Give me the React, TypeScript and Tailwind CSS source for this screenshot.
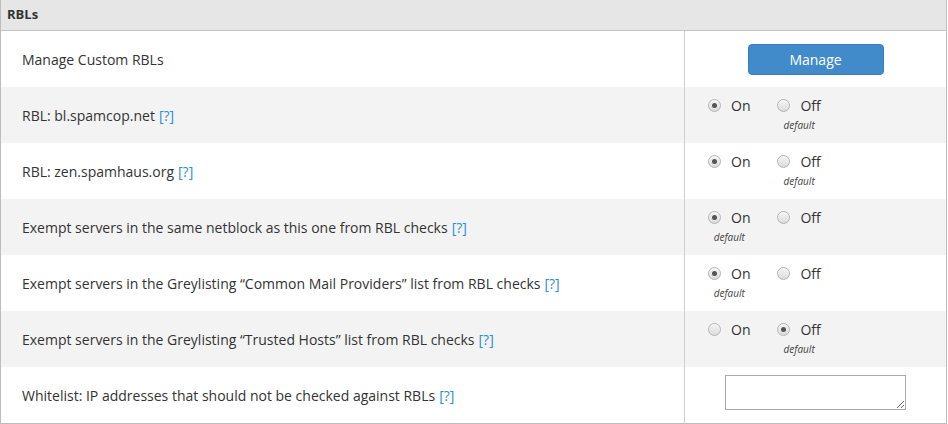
import React from "react";

function Radio({ checked }: { checked: boolean }) {
  return (
    <span className="inline-flex items-center justify-center w-[13px] h-[13px] rounded-full border border-[#b4b4b4] bg-gradient-to-b from-[#f4f4f4] to-[#dcdcdc] shadow-[inset_0_1px_1px_rgba(255,255,255,0.8)]">
      {checked && <span className="block w-[5px] h-[5px] rounded-full bg-[#555]" />}
    </span>
  );
}

function Opt({ label, checked, def }: { label: string; checked: boolean; def: boolean }) {
  return (
    <div className="flex flex-col items-center">
      <div className="flex items-center h-[20px]">
        <Radio checked={checked} />
        <span className="ml-[10px] text-[14px] text-[#333]">{label}</span>
      </div>
      <div className="mt-[3px] h-[14px] leading-[14px] text-[10px] italic text-[#444]">{def ? "default" : ""}</div>
    </div>
  );
}

function OnOff({ on, def }: { on: boolean; def: "on" | "off" }) {
  return (
    <div className="flex pl-[23px] pt-[8px] gap-[27px]">
      <Opt label="On" checked={on} def={def === "on"} />
      <Opt label="Off" checked={!on} def={def === "off"} />
    </div>
  );
}

function Help() {
  return <span className="text-[#2f8dcf] ml-[4px]">[?]</span>;
}

type Row = { label: React.ReactNode; right: React.ReactNode; help?: boolean };

export default function App() {
  const rows: Row[] = [
    {
      label: "Manage Custom RBLs",
      right: (
        <div className="flex justify-center items-center h-full">
          <button className="w-[136px] h-[31px] rounded-[4px] bg-[#428bca] border border-[#357ebd] text-white text-[14px]">
            Manage
          </button>
        </div>
      ),
    },
    { label: "RBL: bl.spamcop.net", help: true, right: <OnOff on={true} def="off" /> },
    { label: "RBL: zen.spamhaus.org", help: true, right: <OnOff on={true} def="off" /> },
    {
      label: "Exempt servers in the same netblock as this one from RBL checks",
      help: true,
      right: <OnOff on={true} def="on" />,
    },
    {
      label: "Exempt servers in the Greylisting “Common Mail Providers” list from RBL checks",
      help: true,
      right: <OnOff on={true} def="on" />,
    },
    {
      label: "Exempt servers in the Greylisting “Trusted Hosts” list from RBL checks",
      help: true,
      right: <OnOff on={false} def="off" />,
    },
    {
      label: "Whitelist: IP addresses that should not be checked against RBLs",
      help: true,
      right: (
        <div className="flex justify-center pt-[8px]">
          <textarea className="block w-[181px] h-[35px] border border-[#a9a9a9] bg-white" />
        </div>
      ),
    },
  ];
  return (
    <div
      className="w-[947px] bg-white border-l border-r border-b border-[#bdbdbd] text-[#333]"
      style={{ fontFamily: '"Open Sans", "Noto Sans", sans-serif' }}
    >
      <div className="h-[31px] bg-[#e6e6e6] border-b border-[#c4c4c4] flex items-center pl-[6px] text-[13px] font-bold text-[#333]">
        RBLs
      </div>
      {rows.map((r, i) => (
        <div key={i} className={`flex h-[56px] ${i % 2 === 1 ? "bg-[#f3f3f3]" : "bg-white"}`}>
          <div className="w-[683px] flex items-center pl-[21px] text-[14px] text-[#333]">
            <span>
              {r.label}
              {r.help && <Help />}
            </span>
          </div>
          <div className="flex-1 border-l border-[#cfcfcf]">{r.right}</div>
        </div>
      ))}
    </div>
  );
}
